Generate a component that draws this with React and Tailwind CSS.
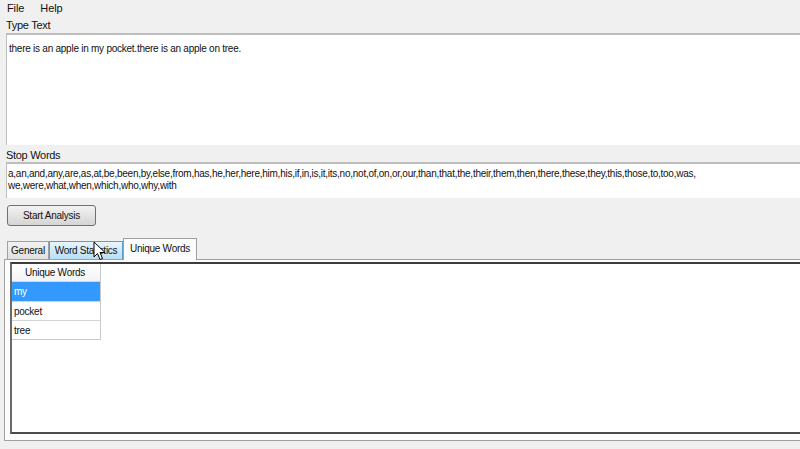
import React from "react";

const rows = ["my", "pocket", "tree"];

const Cursor = () => (
  <svg
    className="absolute left-[93px] top-[241px]"
    width="13"
    height="20"
    viewBox="0 0 13 20"
  >
    <path
      d="M1 1 L1 16 L4.5 12.5 L7 18.5 L9.5 17.5 L7 11.5 L12 11.5 Z"
      fill="#fff"
      stroke="#000"
      strokeWidth="1"
      strokeLinejoin="round"
    />
  </svg>
);

export default function App() {
  return (
    <div
      className="relative w-[800px] h-[449px] overflow-hidden bg-[#f0f0f0] text-[10px] tracking-[-0.25px] text-[#111]"
      style={{ fontFamily: '"Liberation Sans", Arial, sans-serif' }}
    >
      {/* menu */}
      <div className="flex h-[16px] items-center gap-[16px] px-[7px] text-[11px] tracking-[-0.1px]">
        <span>File</span>
        <span>Help</span>
      </div>

      <div className="pl-[6px]">
        <div className="h-[17px] pt-[3px] leading-[13px] text-[11px] tracking-[-0.3px]">Type Text</div>
        <div className="h-[112px] border-t-2 border-l border-[#bdbdbd] bg-white px-[2px] pt-[7px] leading-[13px]">
          there is an apple in my pocket.there is an apple on tree.
        </div>

        <div className="h-[16px] pt-[3px] leading-[12px] text-[11px] tracking-[-0.3px] mt-[1px]">Stop Words</div>
        <div className="h-[36px] border-t-2 border-l border-[#bdbdbd] bg-white px-[1px] pt-[4px] leading-[12px]">
          a,an,and,any,are,as,at,be,been,by,else,from,has,he,her,here,him,his,if,in,is,it,its,no,not,of,on,or,our,than,that,the,their,them,then,there,these,they,this,those,to,too,was,
          <br />
          we,were,what,when,which,who,why,with
        </div>

        <button className="mt-[7px] ml-[1px] flex h-[21px] w-[89px] items-center justify-center rounded-[3px] border border-[#707070] bg-gradient-to-b from-[#f2f2f2] to-[#d5d5d5] text-[10px] tracking-[-0.25px]">
          Start Analysis
        </button>
      </div>

      {/* tabs */}
      <div className="mt-[12px] flex h-[21px] items-end pl-[7px]">
        <div className="flex h-[18px] w-[42px] items-center justify-center border border-[#a0a0a0] border-b-0 bg-gradient-to-b from-[#f2f2f2] to-[#e0e0e0]">
          General
        </div>
        <div className="flex h-[18px] w-[74px] items-center justify-center border border-[#5b9dc8] border-b-0 bg-gradient-to-b from-[#e8f5fc] to-[#b7dff5]">
          Word Statistics
        </div>
        <div className="relative z-10 -mb-[1px] flex h-[22px] w-[74px] items-center justify-center border border-[#a0a0a0] border-b-0 bg-[#fcfcfc] pb-[3px]">
          Unique Words
        </div>
      </div>

      <div className="ml-[4px] h-[182px] border border-[#a0a0a0] border-r-0 bg-[#fcfcfc] pl-[5px] pt-[2px]">
        <div className="h-[172px] border-2 border-r-0 border-t-[#3c3c3c] border-l-[#6a6a6a] border-b-[#4a4a4a] bg-white">
          <div className="w-[89px] border-r border-b border-[#c8c8c8]">
            <div className="flex h-[18px] items-center justify-center border-b border-[#d5d5d5] bg-gradient-to-b from-white to-[#f3f3f3] pr-[2px]">
              Unique Words
            </div>
            {rows.map((r, i) => (
              <div
                key={r}
                className={
                  i === 0
                    ? "flex h-[19px] items-center bg-[#3399ff] px-[2px] text-white"
                    : "flex h-[19px] items-center border-t border-[#d5d5d5] px-[2px]"
                }
              >
                {r}
              </div>
            ))}
          </div>
        </div>
      </div>

      <Cursor />
    </div>
  );
}
